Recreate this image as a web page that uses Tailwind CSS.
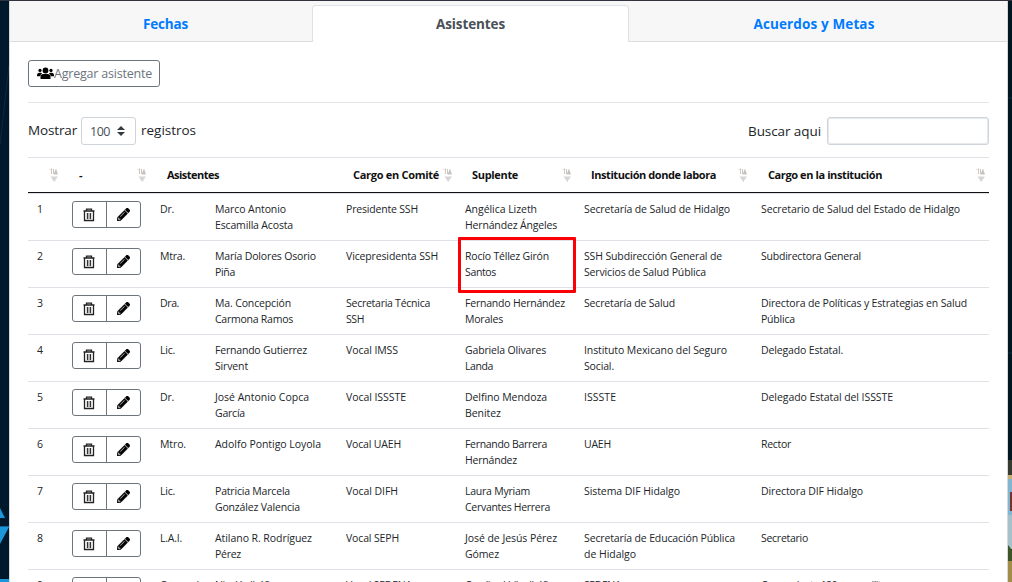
<!DOCTYPE html>
<html lang="es">
<head>
<meta charset="utf-8">
<title>Asistentes</title>
<script src="https://cdn.jsdelivr.net/npm/@tailwindcss/browser@4"></script>
</head>
<body class="h-[582px] overflow-hidden bg-[#00182b] font-['Open_Sans','Noto_Sans',sans-serif] text-[#212529]">
<svg class="hidden">
  <symbol id="sort" viewBox="0 0 10 14"><path d="M.5 1.500h1M2.500 .5V6M4.500 1v5" fill="none" stroke="#d0c6bd" stroke-width="1"/><path d="M4.500 6.500L7 .5 9 6.500z" fill="#c3c3c3"/><path d="M1.500 8.500h7.500L5.200 14z" fill="#d6d6d6"/></symbol>
  <symbol id="trash" viewBox="0 0 12 14"><path d="M.5 3h11M3.500 3V1.200h5V3M1.500 3.500v9h9V3.500" fill="none" stroke="#222" stroke-width="1.300"/><path d="M4.500 5v6M7.500 5v6" stroke="#333" stroke-width="1.300"/><path d="M6 5v6" stroke="#888" stroke-width="1"/></symbol>
  <symbol id="pencil" viewBox="0 0 512 512"><path d="M498 142l-46 46c-5 5-13 5-17 0L324 77c-5-5-5-12 0-17l46-46c19-19 49-19 68 0l60 60c19 19 19 49 0 68zm-214-42L22 362 0 484c-3 16 12 30 28 28l122-22 262-262c5-5 5-13 0-17L301 100c-4-5-12-5-17 0zM124 340c-5-6-5-14 0-20l154-154c6-5 14-5 20 0s5 14 0 20L144 340c-6 5-14 5-20 0zm-36 84h48v36l-64 12-32-31 12-65h36v48z" fill="#000" stroke="#000" stroke-width="14"/></symbol>
</svg>
<div class="relative flex h-full border-t border-[#33333f]">
  <aside class="h-full w-[9px] shrink-0">
    <svg width="9" height="581" viewBox="0 1 9 581"><path d="M9 65L0 145" stroke="#0d2a3c" fill="none"/><path d="M0 508l5 10H0zM0 527h9L0 544z" fill="#1b96db"/><path d="M0 526.500h9" stroke="#12649a"/><path d="M0 579h9v3H0z" fill="#1b96db"/></svg>
  </aside>
  <main class="h-full w-[999px] shrink-0 overflow-hidden border-x border-[#d5d8db] bg-white">
    <nav class="flex h-[41px] bg-[#f7f7f7] pt-1 text-center text-[13.5px] font-bold leading-[39px]">
      <a class="h-[37px] w-[302px] border-b border-[#dcdddf] text-[#007bff]"><span class="block pl-[9px]" data-w="45">Fechas</span></a>
      <a class="h-[37px] w-[317px] rounded-t border border-b-0 border-[#dee2e6] bg-white text-[#495057]"><span class="-mt-px block" data-w="69">Asistentes</span></a>
      <a class="h-[37px] flex-1 border-b border-[#dcdddf] text-[#007bff]"><span class="block pr-2" data-w="121">Acuerdos y Metas</span></a>
    </nav>
    <section class="px-[18px] pt-[18px]">
      <button class="flex h-[27px] w-[132px] items-center rounded-[3px] border border-[#6c757d] pl-2 text-[12.5px] text-[#6c757d]">
        <svg class="h-[13px] w-[17px] shrink-0" viewBox="0 0 17 13"><circle cx="3" cy="3.4" r="1.6"/><circle cx="14" cy="3.4" r="1.6"/><circle cx="8.5" cy="3.5" r="2.9"/><path d="M0 8.500q0-2.800 2.500-2.800h1.400q.7 0 1.200.6-1.600 1-1.900 2.900H0zM17 8.500q0-2.800-2.500-2.800h-1.400q-.7 0-1.200.6 1.600 1 1.900 2.900H17zM3.500 12V10q0-3 3-3h4q3 0 3 3v2z"/></svg>
        <span class="mt-[2px] whitespace-nowrap" data-w="98">Agregar asistente</span>
      </button>
      <div class="mt-[15px] flex h-[55px] items-start justify-between border-t border-[#e5e5e5] pt-[14px] text-[13.5px] leading-[27px]">
        <label class="flex"><span class="w-[53px]" data-w="49">Mostrar</span>
          <span class="flex h-[28px] w-[55px] items-center rounded-[3px] border border-[#ced4da] pl-2 text-[12.5px] text-[#495057]"><span class="w-[27px]" data-w="20">100</span><svg width="8" height="10" viewBox="0 0 8 10"><path d="M0 4l4-4 4 4zM0 6l4 4 4-4z" fill="#343a40"/></svg></span>
          <span class="pl-[5px]" data-w="55">registros</span></label>
        <label class="flex"><span class="w-[79px] leading-[28px]" data-w="73">Buscar aqui</span><span class="h-[28px] w-[162px] rounded-[3px] border border-[#ced4da] shadow-[inset_0_0_1px_1px_#e6e9ec]"></span></label>
      </div>
      <div class="relative">
        <div class="grid h-[36px] grid-cols-[44px_88px_178px_119px_119px_177px_236px] border-t border-b border-t-[#dee2e6] border-b-[#111] text-[11px] font-bold leading-[34px] text-[#111]" id="head"></div>
        <div id="rows"></div>
        <div class="absolute left-[430px] top-[80px] h-[56px] w-[118px] rounded-[1px] border-3 border-[#fb0007]"></div>
      </div>
    </section>
  </main>
  <aside class="h-full w-[4px] shrink-0">
    <svg width="4" height="581" viewBox="0 1 4 581" preserveAspectRatio="none"><path d="M0 1h4v460H0z" fill="#001722"/><path d="M0 98h4M0 353h4" stroke="#0b2b3a"/><path d="M0 460h4v15H0z" fill="#353b30"/><path d="M0 475h4v4H0z" fill="#c6ae72"/><path d="M0 479h4v66H0z" fill="#82b5cf"/><path d="M0 515h4v34H0z" fill="#a7c1ca"/><path d="M2 492h2v19H2z" fill="#74342e"/><path d="M0 545l4 5v12H0z" fill="#3c5428"/><path d="M0 561h4v21H0z" fill="#a28d48"/></svg>
  </aside>
</div>
<script>
const head = [['',0,0,21],['-',7,4,65],['Asistentes',7,52,0],['Cargo en Comité',15,86,105],['Suplente',15,46,105],['Institución donde labora',15,125,162],['Cargo en la institución',15,114,223]];
document.getElementById('head').innerHTML = head.map(([t,p,w,s]) =>
  `<div class="relative whitespace-nowrap" style="padding-left:${p}px"><span data-w="${w}">${t}</span>${s ? `<svg class="absolute top-[10px] h-[14px] w-[10px]" style="left:${s}px"><use href="#sort"/></svg>` : ''}</div>`).join('');

// Each line of a cell carries its width in pixels.
const rows = [
 [['Dr.',14],[['Marco Antonio',71],['Escamilla Acosta',78]],[['Presidente SSH',72]],[['Angélica Lizeth',72],['Hernández Ángeles',92]],[['Secretaría de Salud de Hidalgo',146]],[['Secretario de Salud del Estado de Hidalgo',199]]],
 [['Mtra.',25],[['María Dolores Osorio',101],['Piña',20]],[['Vicepresidenta SSH',92]],[['Rocío Téllez Girón',84],['Santos',31]],[['SSH Subdirección General de',138],['Servicios de Salud Pública',122]],[['Subdirectora General',100]]],
 [['Dra.',19],[['Ma. Concepción',76],['Carmona Ramos',78]],[['Secretaria Técnica',84],['SSH',18]],[['Fernando Hernández',100],['Morales',38]],[['Secretaría de Salud',91]],[['Directora de Políticas y Estrategias en Salud',206],['Pública',34]]],
 [['Lic.',15],[['Fernando Gutierrez',92],['Sirvent',33]],[['Vocal IMSS',52]],[['Gabriela Olivares',81],['Landa',28]],[['Instituto Mexicano del Seguro',143],['Social.',30]],[['Delegado Estatal.',82]]],
 [['Dr.',14],[['José Antonio Copca',94],['García',30]],[['Vocal ISSSTE',60]],[['Delfino Mendoza',82],['Benitez',36]],[['ISSSTE',32]],[['Delegado Estatal del ISSSTE',132]]],
 [['Mtro.',26],[['Adolfo Pontigo Loyola',106]],[['Vocal UAEH',55]],[['Fernando Barrera',82],['Hernández',52]],[['UAEH',27]],[['Rector',30]]],
 [['Lic.',15],[['Patricia Marcela',75],['González Valencia',85]],[['Vocal DIFH',52]],[['Laura Myriam',65],['Cervantes Herrera',85]],[['Sistema DIF Hidalgo',96]],[['Directora DIF Hidalgo',102]]],
 [['L.A.I.',22],[['Atilano R. Rodríguez',97],['Pérez',26]],[['Vocal SEPH',53]],[['José de Jesús Pérez',92],['Gómez',34]],[['Secretaría de Educación Pública',151],['de Hidalgo',52]],[['Secretario',47]]],
 [['Comando.',47],[['Nicolás Ibáñez',65]],[['Vocal SEDENA',66]],[['Carolina Uribe Ibáñez',93]],[['SEDENA',37]],[['Comandante 180 zona militar',129]]]
];
const line = ([t,w]) => `<div class="h-4 whitespace-nowrap"><span data-w="${w}">${t}</span></div>`;
const btn = (id, cls, ic) => `<span class="flex h-[27px] items-center justify-center border border-[#6c757d] ${cls}"><svg class="${ic}"><use href="#${id}"/></svg></span>`;
document.getElementById('rows').innerHTML = rows.map((r,i) =>
 `<div class="grid h-[47px] grid-cols-[44px_88px_55px_131px_119px_119px_177px_228px] border-t border-[#dee2e6] pt-[7px] text-[10.5px] leading-4">
  <div class="pl-[9px]">${i+1}</div>
  <div class="flex items-start">${btn('trash','w-[35px] rounded-l-[3px] pr-px','h-[14px] w-[12px]')}${btn('pencil','-ml-px w-[35px] rounded-r-[3px]','h-[13px] w-[13px]')}</div>
  <div>${line(r[0])}</div>${r.slice(1).map(c => `<div>${c.map(line).join('')}</div>`).join('')}
 </div>`).join('');

// Fit letter spacing so each label takes its intended width.
function fit() {
  document.querySelectorAll('[data-w]').forEach(el => {
    const w = +el.dataset.w, n = el.textContent.length;
    if (!w || !n) return;
    el.style.letterSpacing = '0px';
    const range = document.createRange();
    range.selectNodeContents(el);
    el.style.letterSpacing = ((w - range.getBoundingClientRect().width) / n).toFixed(3) + 'px';
  });
}
window.addEventListener('load', () => { fit(); requestAnimationFrame(fit); setTimeout(fit, 50); });
document.fonts.ready.then(fit);
</script>
</body>
</html>
